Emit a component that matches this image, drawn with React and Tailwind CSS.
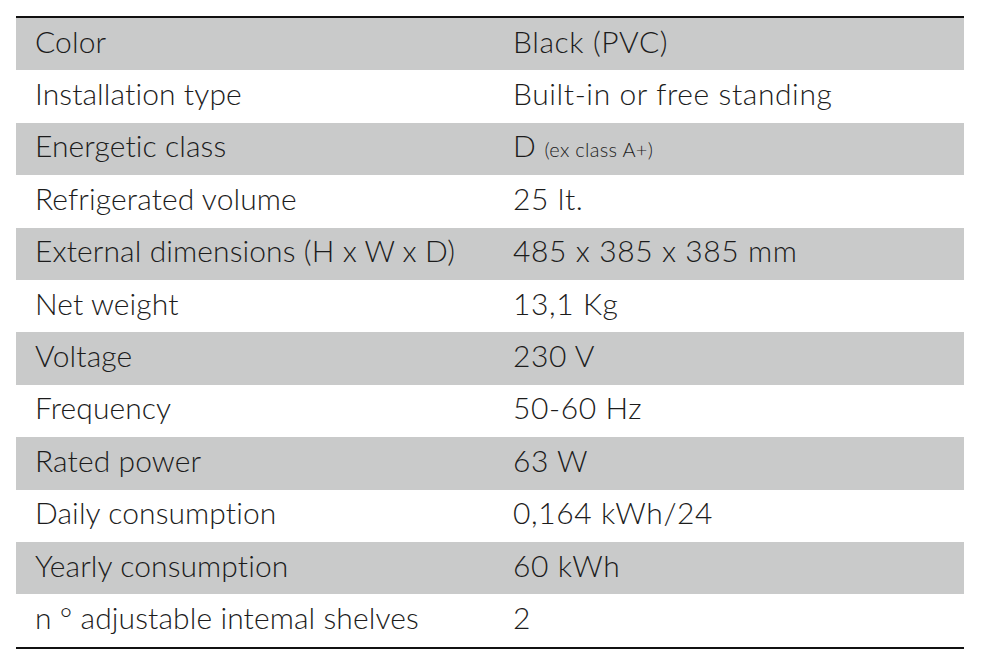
import React from 'react'

const rows = [
    ['Color', 'Black (PVC)'],
    ['Installation type', 'Built-in or free standing'],
    ['Energetic class', 'D', '(ex class A+)'],
    ['Refrigerated volume', '25 lt.'],
    ['External dimensions (H x W x D)', '485 x 385 x 385 mm'],
    ['Net weight', '13,1 Kg'],
    ['Voltage', '230 V'],
    ['Frequency', '50-60 Hz'],
    ['Rated power', '63 W'],
    ['Daily consumption', '0,164 kWh/24'],
    ['Yearly consumption', '60 kWh'],
    ['n ° adjustable intemal shelves', '2'],
]

function App() {
    return (
        <div className="w-[992px] h-[654px] bg-white pt-4 pl-4" style={{ fontFamily: 'Lato, "Open Sans", sans-serif' }}>
            <div className="w-[948px] border-t-2 border-b-2 border-[#111]">
                {rows.map((row, i) => (
                    <div
                        key={i}
                        className={'flex items-center h-[52.4px] pb-1.5 text-[30px] font-light text-[#1c1c1c] ' + (i % 2 === 0 ? 'bg-[#c9caca]' : 'bg-white')}
                    >
                        <div className="w-[497px] pl-[19px] tracking-[0.1px]">{row[0]}</div>
                        <div className="tracking-[0.6px]">
                            {row[1]}
                            {row[2] && <span className="text-[20px] ml-2 tracking-[0.3px]">{row[2]}</span>}
                        </div>
                    </div>
                ))}
            </div>
        </div>
    )
}

export default App
